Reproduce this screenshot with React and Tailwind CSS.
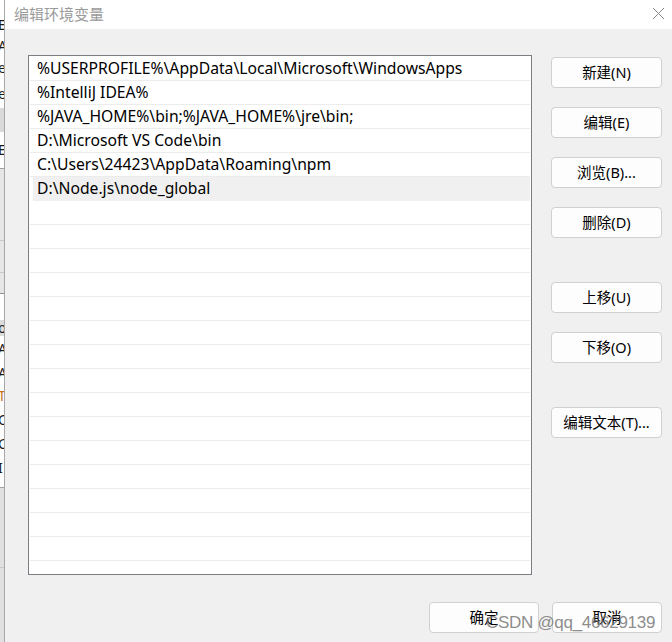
import React from "react";

const FONT = { fontFamily: '"Segoe UI", "Noto Sans", "Noto Sans CJK SC", sans-serif' };

const paths = [
  "%USERPROFILE%\\AppData\\Local\\Microsoft\\WindowsApps",
  "%IntelliJ IDEA%",
  "%JAVA_HOME%\\bin;%JAVA_HOME%\\jre\\bin;",
  "D:\\Microsoft VS Code\\bin",
  "C:\\Users\\24423\\AppData\\Roaming\\npm",
  "D:\\Node.js\\node_global",
];

function Btn({ children, className = "" }) {
  return (
    <div
      className={
        "h-[31px] flex items-center justify-center bg-[#fdfdfd] border border-[#d0d0d0] rounded-[4px] text-[14.5px] text-black " +
        className
      }
    >
      {children}
    </div>
  );
}

function Frag({ h, text, className = "" }) {
  return (
    <div className={"flex items-center overflow-hidden whitespace-nowrap text-[14px] leading-none " + className} style={{ height: h }}>
      <span className="-ml-[2px]">{text}</span>
    </div>
  );
}

function LeftStrip() {
  return (
    <div className="w-[5px] shrink-0 h-full flex flex-col border-r border-[#a8a8a8] overflow-hidden text-[#1a1a1a]" style={FONT}>
      <div className="h-[14px] bg-white" />
      <Frag h={22} text="E" className="bg-white" />
      <Frag h={20} text="A" className="bg-white" />
      <Frag h={24} text="e" className="bg-white" />
      <Frag h={28} text="e" className="bg-white" />
      <div className="h-[24px] bg-[#d9d9d9]" />
      <Frag h={36} text="E" className="bg-white" />
      <div className="h-[1px] bg-[#a0a0a0]" />
      <div className="h-[72px] bg-[#e6e6e6] border-b border-[#c8c8c8]" />
      <div className="h-[32px] bg-[#e6e6e6] border-b border-[#c8c8c8]" />
      <div className="h-[21px] bg-[#e6e6e6] border-b border-[#909090]" />
      <div className="h-[26px] bg-white" />
      <Frag h={16} text="o" className="bg-[#dcdcdc]" />
      <Frag h={26} text="A" className="bg-white" />
      <Frag h={22} text="A" className="bg-white" />
      <Frag h={24} text="T" className="bg-white text-[#c8701a]" />
      <Frag h={24} text="O" className="bg-white" />
      <Frag h={24} text="C" className="bg-white" />
      <Frag h={24} text="I" className="bg-white" />
      <div className="h-[7px] bg-white" />
      <div className="h-[1px] bg-[#a0a0a0]" />
      <div className="h-[80px] bg-[#e0e0e0] border-b border-[#c8c8c8]" />
      <div className="flex-1 bg-[#e0e0e0]" />
    </div>
  );
}

export default function App() {
  const emptyRows = Array.from({ length: 16 });
  return (
    <div className="relative w-[672px] h-[642px] flex overflow-hidden bg-[#f0f0f0]" style={FONT}>
      <LeftStrip />
      <div className="flex-1 flex flex-col">
        <div className="h-[29px] bg-white flex items-center justify-between pl-[9px] pr-[7px]">
          <span className="text-[15px] text-[#9a9a9a]">编辑环境变量</span>
          <svg width="13" height="13" viewBox="0 0 13 13" className="mb-[2px]">
            <path d="M1 1 L12 12 M12 1 L1 12" stroke="#8a8a8a" strokeWidth="1" fill="none" />
          </svg>
        </div>
        <div className="flex-1 flex flex-col">
          <div className="flex pl-[23px] pt-[26px]">
            <div className="w-[504px] h-[520px] bg-white border border-[#7a7e83] p-[1px] overflow-hidden flex flex-col">
              {paths.map((p, i) => (
                <div
                  key={i}
                  className={
                    "h-[24px] shrink-0 border-b border-[#ececec] flex items-center text-[15.7px] text-black whitespace-nowrap " +
                    (i === 5 ? "ml-[3px] bg-[#f0f0f0] border-[#f0f0f0] pl-[4px]" : "pl-[7px]")
                  }
                >
                  {p}
                </div>
              ))}
              {emptyRows.map((_, i) => (
                <div key={i} className="h-[24px] shrink-0 border-b border-[#ececec]" />
              ))}
            </div>
            <div className="ml-[19px] w-[111px] pt-[2px] flex flex-col">
              <Btn>新建(N)</Btn>
              <Btn className="mt-[19px]">编辑(E)</Btn>
              <Btn className="mt-[19px]">浏览(B)...</Btn>
              <Btn className="mt-[19px]">删除(D)</Btn>
              <Btn className="mt-[44px]">上移(U)</Btn>
              <Btn className="mt-[19px]">下移(O)</Btn>
              <Btn className="mt-[44px]">编辑文本(T)...</Btn>
            </div>
          </div>
          <div className="flex justify-end pr-[10px] pt-[27px] gap-[13px]">
            <Btn className="w-[110px]">确定</Btn>
            <Btn className="w-[110px]">取消</Btn>
          </div>
        </div>
      </div>
      <div
        className="absolute left-[486px] top-[612px] text-[17px] leading-[21px] tracking-[-0.3px] text-[#6e6e6e]/80 whitespace-nowrap"
        style={{ fontFamily: '"Liberation Sans", Arial, sans-serif' }}
      >
        CSDN @qq_46629139
      </div>
    </div>
  );
}
